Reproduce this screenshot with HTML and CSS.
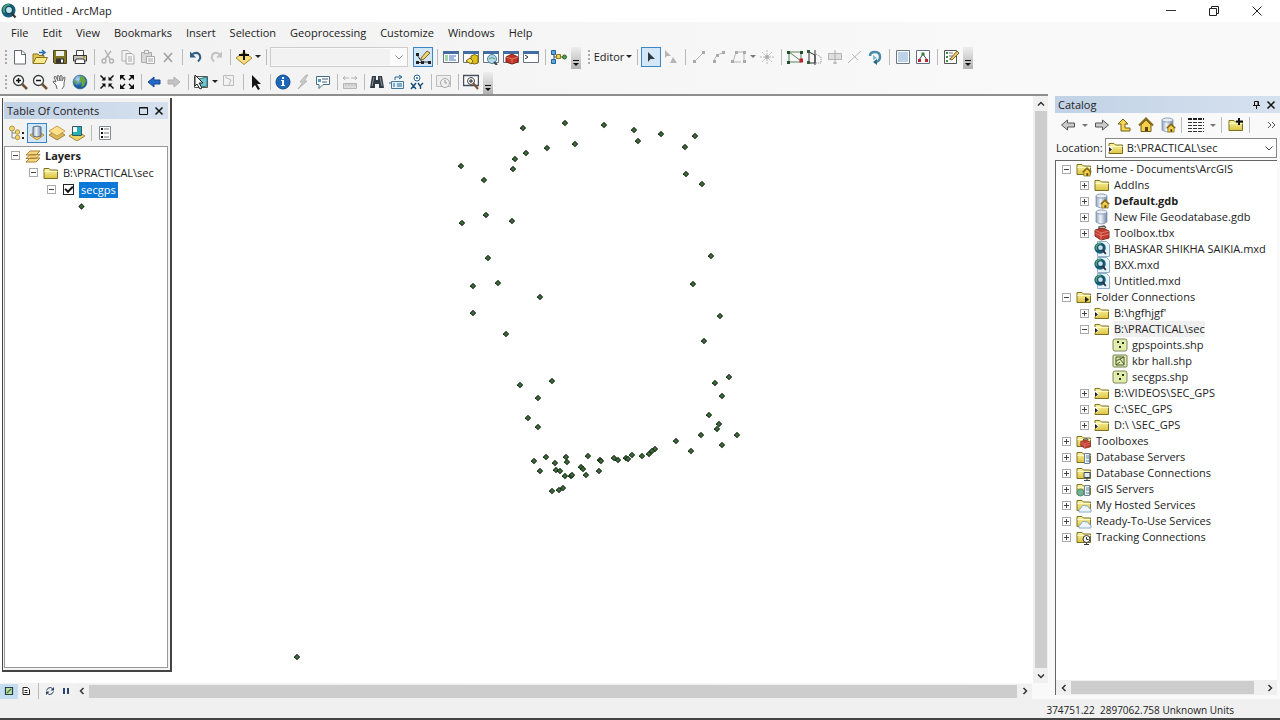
FILE: index.html
```
<!DOCTYPE html>
<html lang="en">
<head>
<meta charset="utf-8">
<title>Untitled - ArcMap</title>
<link rel="stylesheet" href="styles.css">
</head>
<body>
<svg class="defs" aria-hidden="true">
  <defs>
    <linearGradient id="gFolder" x2="0" y2="1"><stop offset="0" stop-color="#fbf5a4"/><stop offset="1" stop-color="#dcc443"/></linearGradient>
    <linearGradient id="gCyl"><stop offset="0" stop-color="#8fa3bd"/><stop offset=".4" stop-color="#f1f5fa"/><stop offset="1" stop-color="#7488a6"/></linearGradient>
    <radialGradient id="gGlobe" cx=".35" cy=".3"><stop offset="0" stop-color="#b5def6"/><stop offset="1" stop-color="#1b5aa0"/></radialGradient>
    <marker id="gps" markerWidth="7" markerHeight="7" refX="3.5" refY="3.5" markerUnits="userSpaceOnUse"><path d="M3.500 .3l3.200 3.200-3.200 3.200-3.200-3.200z" fill="#142414"/><path d="M3.500 1.400l2.100 2.100-2.100 2.100-2.100-2.100z" fill="#3d6e3a"/></marker>
  </defs>
  <symbol id="app" viewBox="0 0 16 16"><circle cx="7.500" cy="7.500" r="7" fill="#175e78"/><path d="M2 5q2-4 6-4l1 2-3 3-2 4-2-1z" fill="#4aa673"/><circle cx="8" cy="7" r="3.600" fill="#bfe4ee" stroke="#164668" stroke-width="1.400"/><path d="M10.500 10l4 4.500" stroke="#333" stroke-width="2.200"/></symbol>
  <symbol id="new" viewBox="0 0 16 16"><path d="M2.500 1.500h7.500l3.500 3.500v10h-11z" fill="#fff" stroke="#606873"/><path d="M9.500 1.500v4h4" fill="none" stroke="#606873"/></symbol>
  <symbol id="open" viewBox="0 0 16 16"><path d="M1 14V5h5l1 1.500h5V9" fill="#e0c552" stroke="#8b741f"/><path d="M1 14.500l3-6h11.500l-3 6z" fill="#fbe88a" stroke="#8b741f"/><path d="M7 3.500h5m-2-2.500l3 2.500-3 2.500" fill="none" stroke="#286ca6" stroke-width="1.500"/></symbol>
  <symbol id="save" viewBox="0 0 16 16"><path d="M1.500 1.500h13v13h-12l-1-1z" fill="#827629" stroke="#4c4720"/><path d="M4 2h8v5H4z" fill="#f2f2ed"/><path d="M4 9.500h8v5H4z" fill="#343434"/><path d="M9 10.500h2v3H9z" fill="#fff"/></symbol>
  <symbol id="print" viewBox="0 0 16 16"><path d="M4.500 6V1.500h7V6" fill="#fff" stroke="#444"/><path d="M1.500 6.500h13V12h-13z" fill="#c5c5bd" stroke="#333"/><path d="M4 10h8l1 4.500H3z" fill="#fff" stroke="#333"/><path d="M11 8h2" stroke="#a98b00" stroke-width="1.500"/></symbol>
  <symbol id="cut" viewBox="0 0 16 16"><path d="M5 1l5 9M11 2l-6 8" stroke="#b4b4b4" stroke-width="1.500"/><circle cx="4" cy="12" r="2" fill="none" stroke="#b4b4b4" stroke-width="1.500"/><circle cx="11.500" cy="12" r="2" fill="none" stroke="#b4b4b4" stroke-width="1.500"/></symbol>
  <symbol id="copy" viewBox="0 0 16 16"><path d="M2 1.500h6l2 2V12H2z" fill="#f3f3f3" stroke="#b0b0b0"/><path d="M6 4.500h6l2 2V15H6zM8 8h4M8 10h4M8 12h4" fill="#f6f6f6" stroke="#a9a9a9"/></symbol>
  <symbol id="paste" viewBox="0 0 16 16"><path d="M1.500 3.500h10v10h-10z" fill="#d8d8d8" stroke="#aaa"/><path d="M4.500 1.500h4v3h-4z" fill="#eee" stroke="#aaa"/><path d="M6.500 7.500h8v7h-8zM8 10h5M8 12h5" fill="#f8f8f8" stroke="#aaa"/></symbol>
  <symbol id="del" viewBox="0 0 16 16"><path d="M4 4l8 9M12 4l-8 9" stroke="#a4a4a4" stroke-width="1.800"/></symbol>
  <symbol id="undo" viewBox="0 0 16 16"><path d="M4 5.500q4-3 7-.5 3 3.500-1 7.500" fill="none" stroke="#315d86" stroke-width="2"/><path d="M2 2.500v6h6z" fill="#315d86"/></symbol>
  <symbol id="redo" viewBox="0 0 16 16"><path d="M12 5.500q-4-3-7-.5-3 3.500 1 7.500" fill="none" stroke="#c2c2c2" stroke-width="2"/><path d="M14 2.500v6H8z" fill="#c2c2c2"/></symbol>
  <symbol id="add" viewBox="0 0 16 16"><path d="M0 9l8-6 8 6-8 6.500z" fill="#f8df78" stroke="#a28938"/><path d="M8 1v10M3 6h10" stroke="#111" stroke-width="2"/></symbol>
  <symbol id="editbar" viewBox="0 0 16 16"><path d="M2 6l5 7h7M2 13.500h5" fill="none" stroke="#333"/><path d="M1 4h3v3H1zM1 12h3v3H1zM6 12h3v3H6zM13 12h3v3h-3z" fill="#222"/><path d="M6 9l6-7 3 2-6 6-3 1z" fill="#efd477" stroke="#7b642a"/></symbol>
  <symbol id="win" viewBox="0 0 16 16"><path d="M.5 2.500h15v11H.5z" fill="#fff" stroke="#687483"/><path d="M0 2h16v3H0z" fill="#426da2"/></symbol>
  <symbol id="wtoc" viewBox="0 0 16 16"><use href="#win"/><path d="M2 7h3M2 9h3M2 11h3" stroke="#42ad53"/><path d="M6 7h7M6 9h5M6 11h7" stroke="#3970bd"/></symbol>
  <symbol id="wcat" viewBox="0 0 16 16"><use href="#win"/><path d="M8 7q3.500-3 7 0v7q-3.500 2-7 0z" fill="#e1c01a" stroke="#79670d"/><path d="M3 12l4-3 3 3-2 3z" fill="#f6df54" stroke="#79670d"/></symbol>
  <symbol id="wsea" viewBox="0 0 16 16"><use href="#win"/><circle cx="9" cy="10" r="4.500" fill="#b3d8e9" stroke="#4e819f"/><path d="M6 10q3-3 6 0" stroke="#4a9d71" fill="none"/><path d="M11 13l3 3" stroke="#444" stroke-width="2"/></symbol>
  <symbol id="wbox" viewBox="0 0 16 16"><use href="#win"/><path d="M3 8l6-3 6 3v5l-6 2-6-2z" fill="#c13426" stroke="#7d2017"/><path d="M3 8l6 2 6-2M9 10v4" stroke="#f5aaa0" stroke-width=".6" fill="none"/></symbol>
  <symbol id="wpy" viewBox="0 0 16 16"><use href="#win"/><path d="M2 6l3 2-3 2" stroke="#333" fill="none"/></symbol>
  <symbol id="model" viewBox="0 0 16 16"><path d="M3 3v10M3 8h11" stroke="#415263"/><path d="M.5 1.500h4v4h-4zM.5 10.500h4v4h-4z" fill="#58a9df" stroke="#246295"/><path d="M5.500 5.500h4v4h-4z" fill="#ead45a" stroke="#8b791c"/><circle cx="13.500" cy="8" r="2" fill="#54a741" stroke="#306226"/></symbol>
  <symbol id="edarrow" viewBox="0 0 16 16"><path d="M5 3v10l2.500-3H12z" fill="#2c3844"/></symbol>
  <symbol id="edanno" viewBox="0 0 16 16"><path d="M2 1v8l2-2h4zM7 14l3-6 4 6z" fill="#b5b5b5"/></symbol>
  <symbol id="line" viewBox="0 0 16 16"><path d="M4 12l8-8" stroke="#b5b5b5"/><path d="M2 11h3v3H2zM11 2h3v3h-3z" fill="#aaa"/></symbol>
  <symbol id="arc" viewBox="0 0 16 16"><path d="M3 13q1-8 9-9" stroke="#b5b5b5" fill="none"/><path d="M2 11h3v3H2zM11 2h3v3h-3zM5 5h3v3H5z" fill="#aaa"/></symbol>
  <symbol id="trace" viewBox="0 0 16 16"><path d="M2 13L5 3h8v10M2 13h8" stroke="#b5b5b5" fill="none"/><path d="M0 11h3v3H0zM4 2h3v3H4zM12 2h3v3h-3zM12 11h3v3h-3z" fill="#aaa"/></symbol>
  <symbol id="burst" viewBox="0 0 16 16"><path d="M8 1v14M1 8h14M3 3l10 10M3 13L13 3" stroke="#b8b8b8" stroke-dasharray="2 1"/><circle cx="8" cy="8" r="2" fill="#aaa"/></symbol>
  <symbol id="vertex" viewBox="0 0 16 16"><path d="M2 3v10h12V3zM2 3l12 9" stroke="#57845b" fill="none"/><path d="M0 2h3v3H0zM13 2h3v3h-3zM0 12h3v3H0z" fill="#244d2c"/><path d="M12.500 9.500h3.500v4h-3.500z" fill="#c0202c"/></symbol>
  <symbol id="reshape" viewBox="0 0 16 16"><path d="M2 2v12h6V6L2 3M8 1v15" stroke="#333" fill="none"/><path d="M9 5l5 3v6H9" stroke="#888" fill="none" stroke-dasharray="1 1"/><path d="M0 1h3v3H0zM0 12h3v3H0z" fill="#315e3b"/></symbol>
  <symbol id="cutpoly" viewBox="0 0 16 16"><path d="M1.500 4.500h13v6h-13z" fill="#dedede" stroke="#b4b4b4"/><path d="M8 1v14M6 14h4" stroke="#aaa"/></symbol>
  <symbol id="split" viewBox="0 0 16 16"><path d="M1 14L14 2M5 5l6 6" stroke="#b8b8b8"/></symbol>
  <symbol id="rotate" viewBox="0 0 16 16"><path d="M3 7q0-4 5-4t5 5q0 4-4 5" fill="none" stroke="#4c8ca8" stroke-width="2.500"/><path d="M10 10v6l-4-3z" fill="#286985"/><path d="M6 6l4 3-4 2z" fill="#78bed5"/></symbol>
  <symbol id="attr" viewBox="0 0 16 16"><path d="M1.500 1.500h13v13h-13z" fill="#fff" stroke="#6b7886"/><path d="M3 4h10M3 6h10M3 8h10M3 10h10M3 12h10" stroke="#7ba7d1"/></symbol>
  <symbol id="sketch" viewBox="0 0 16 16"><path d="M1.500 1.500h13v13h-13z" fill="#fff" stroke="#647181"/><path d="M4 11l4-6 4 6" stroke="#444" fill="none"/><path d="M3 10h3v3H3zM10 10h3v3h-3z" fill="#b32934"/><path d="M6.500 3.500h3v3h-3z" fill="#317e3e"/></symbol>
  <symbol id="template" viewBox="0 0 16 16"><path d="M1.500 1.500h12v13h-12z" fill="#fff" stroke="#555"/><path d="M3 4h2M3 8h2M3 12h2" stroke="#389048" stroke-width="2"/><path d="M6 4h4M6 7h4M6 10h4" stroke="#777"/><path d="M7 10l7-8 2 2-7 7z" fill="#ebc967" stroke="#786330"/></symbol>
  <symbol id="zin" viewBox="0 0 16 16"><circle cx="6.500" cy="6.500" r="5" fill="#f7fafb" stroke="#3b3d40" stroke-width="1.300"/><path d="M10 10l5 5" stroke="#735336" stroke-width="2.500"/><path d="M4 6.500h5M6.500 4v5" stroke="#111" stroke-width="1.500"/></symbol>
  <symbol id="zout" viewBox="0 0 16 16"><circle cx="6.500" cy="6.500" r="5" fill="#f7fafb" stroke="#3b3d40" stroke-width="1.300"/><path d="M10 10l5 5" stroke="#735336" stroke-width="2.500"/><path d="M4 6.500h5" stroke="#111" stroke-width="1.500"/></symbol>
  <symbol id="pan" viewBox="0 0 16 16"><path d="M5 15l-1-4-3-3q0-2 3 0L2 3q1-1 2 0l2 4-1-5q1-1 2 0l1 5V2q1-1 2 0v5l2-4q1 0 1 1l-1 5v3l-2 3" fill="#fff" stroke="#666"/></symbol>
  <symbol id="globe" viewBox="0 0 16 16"><circle cx="8" cy="8" r="7" fill="url(#gGlobe)" stroke="#225d79" stroke-width=".5"/><path d="M8 2l4 1 2 4-2 5-3 1 1-4-3-2 1-2zM2 6l3 1v3l-1 1z" fill="#65a83f"/></symbol>
  <symbol id="fzin" viewBox="0 0 16 16"><path d="M1.500 1.500l4 4M14.500 1.500l-4 4M1.500 14.500l4-4M14.500 14.500l-4-4" stroke="#111" stroke-width="1.500"/><path d="M6.500 2.500v4h-4zM9.500 2.500v4h4zM6.500 13.500v-4h-4zM9.500 13.500v-4h4z" fill="#111"/></symbol>
  <symbol id="fzout" viewBox="0 0 16 16"><path d="M2 2l4 4M14 2l-4 4M2 14l4-4M14 14l-4-4" stroke="#111" stroke-width="1.500"/><path d="M1 1h5L1 6zM15 1h-5l5 5zM1 15h5l-5-5zM15 15h-5l5-5z" fill="#111"/></symbol>
  <symbol id="back" viewBox="0 0 16 16"><path d="M2 8l6-5v3h6v4H8v3z" fill="#2368c6" stroke="#164891"/></symbol>
  <symbol id="fwd" viewBox="0 0 16 16"><path d="M14 8L8 3v3H2v4h6v3z" fill="#c3c3c3" stroke="#b0b0b0"/></symbol>
  <symbol id="selfeat" viewBox="0 0 16 16"><path d="M1.500 2.500h13v11h-13z" fill="#e9f2ed" stroke="#555"/><path d="M6 5l8-2v9l-6 1z" fill="#6bc6d0" stroke="#34757e"/><path d="M2 1v11l2-2 3 5 2-1-3-5h4z" fill="#fff" stroke="#222"/></symbol>
  <symbol id="clearsel" viewBox="0 0 16 16"><path d="M2.500 1.500h10v10h-10zM4 3l6 3-2 5" fill="#f2f2f2" stroke="#bbb"/></symbol>
  <symbol id="arrow" viewBox="0 0 16 16"><path d="M4 1v13l3-3 3 5 2-1-3-5h4z" fill="#151515"/></symbol>
  <symbol id="info" viewBox="0 0 16 16"><circle cx="8" cy="8" r="7" fill="#1d68b9" stroke="#134885"/><path d="M7 3h2v2H7zM6 6h3v5h1v1H6v-1h1V7H6z" fill="#fff"/></symbol>
  <symbol id="bolt" viewBox="0 0 16 16"><path d="M11 1L5 8h3l-5 7 9-8H9l4-6z" fill="#ccc" stroke="#b5b5b5"/></symbol>
  <symbol id="popup" viewBox="0 0 16 16"><path d="M1.500 2.500h13v8H8l-4 4v-4H1.500z" fill="#fff" stroke="#426d88"/><path d="M3 5h3v3H3z" fill="#4d9cc5"/><path d="M7 5h6M7 8h5" stroke="#557"/></symbol>
  <symbol id="measure" viewBox="0 0 16 16"><path d="M1.500 9.500h13v5h-13zM4 10v2M7 10v2M10 10v2M13 10v2M1 4h6M9 4h6M3 2L1 4l2 2M13 2l2 2-2 2" fill="#ddd" stroke="#b5b5b5"/></symbol>
  <symbol id="find" viewBox="0 0 16 16"><path d="M3 2h4v4h2V2h4l2 12h-5v-4H6v4H1z" fill="#303b43"/><path d="M5 3L3 12M11 3l2 9" stroke="#8b969b"/></symbol>
  <symbol id="route" viewBox="0 0 16 16"><path d="M2.500 7.500h12v7h-12z" fill="#e2f1f8" stroke="#4a7796"/><path d="M4 10h2M8 10h5M4 12h2M8 12h5M6 6V3h6m-2-2l3 2-3 2M0 9h2" fill="none" stroke="#246799"/></symbol>
  <symbol id="xy" viewBox="0 0 16 16"><circle cx="8" cy="4" r="3" fill="#fff" stroke="#246799"/><circle cx="8" cy="4" r="1" fill="#246799"/><path d="M2 9l5 6M7 9l-5 6M9 9l2 3 3-3M11.500 12v3" stroke="#174d76" stroke-width="1.400" fill="none"/></symbol>
  <symbol id="time" viewBox="0 0 16 16"><path d="M.5 1.500h14v11H.5z" fill="#eee" stroke="#bcbcbc"/><circle cx="9" cy="9" r="4.500" fill="#eee" stroke="#aaa"/><path d="M9 6v3h2" stroke="#999" fill="none"/></symbol>
  <symbol id="viewer" viewBox="0 0 16 16"><path d="M.5 1.500h15v10H.5z" fill="#fff" stroke="#445260" stroke-width="1.500"/><circle cx="8" cy="7" r="3.500" fill="#fff" stroke="#444"/><path d="M10 9l5 6" stroke="#775437" stroke-width="2"/><path d="M6 7h4M8 5v4" stroke="#222"/></symbol>
  <symbol id="layers" viewBox="0 0 16 16"><path d="M1 14l4-4h10l-4 4zM1 10.500l4-4h10l-4 4zM1 7l4-4h10l-4 4z" fill="#f2d87c" stroke="#ae803b"/></symbol>
  <symbol id="lorder" viewBox="0 0 16 16"><path d="M3 5v8h5M3 8h4" stroke="#888" fill="none"/><circle cx="3" cy="3.500" r="2.500" fill="#f4d66e" stroke="#b19543"/><circle cx="8.500" cy="7" r="2.200" fill="#f4d66e" stroke="#b19543"/><circle cx="8.500" cy="12.500" r="2.200" fill="#f4d66e" stroke="#b19543"/><path d="M13 8h2M13 13h2" stroke="#222" stroke-width="2"/></symbol>
  <symbol id="lsource" viewBox="0 0 16 16"><path d="M1 10l7-4 7 4-7 5z" fill="#f4d36b" stroke="#b38b38"/><path d="M4 2q4-2 8 0v9q-4 2-8 0z" fill="url(#gCyl)" stroke="#596c82"/></symbol>
  <symbol id="lvis" viewBox="0 0 16 16"><path d="M0 10l8-5 8 5-8 5z" fill="#d9b65a" stroke="#a5843b"/><path d="M0 6l8-5 8 5-8 5z" fill="#ffe08b" stroke="#c69e50"/></symbol>
  <symbol id="lsel" viewBox="0 0 16 16"><path d="M0 11l8-5 8 5-8 5z" fill="#eed26a" stroke="#a5843b"/><path d="M3.500 1.500h9v9h-9z" fill="#23b1b6" stroke="#315b62"/><path d="M4 2h4v5H4z" fill="#fff"/></symbol>
  <symbol id="lopt" viewBox="0 0 16 16"><path d="M2.500 1.500h11v13h-11z" fill="#fff" stroke="#858b92"/><path d="M4 4h2M4 8h2M4 12h2" stroke="#111" stroke-width="2"/><path d="M7 4h5M7 8h5M7 12h5" stroke="#777"/></symbol>
  <symbol id="folder" viewBox="0 0 16 16"><path d="M1 13.500v-10h5l1.500 1.500h7v8.500z" fill="url(#gFolder)" stroke="#7c7024"/><path d="M1.500 6.500h13" stroke="#fffbc7"/></symbol>
  <symbol id="fconn" viewBox="0 0 16 16"><use href="#folder"/><path d="M0 6h2l3 3-3 3H0z" fill="#fff"/><path d="M1 7l3 2.500-3 2.500z" fill="#222"/></symbol>
  <symbol id="froot" viewBox="0 0 16 16"><use href="#folder"/><path d="M9 7.500l4 3-4 3z" fill="#222"/></symbol>
  <symbol id="house" viewBox="0 0 16 16"><path d="M3 8v6.500h10V8L8 3z" fill="#f3ce46" stroke="#715e1b"/><path d="M1 8.500l7-7 7 7" fill="none" stroke="#876a17" stroke-width="2"/><path d="M7 10h3v4H7z" fill="#544119"/></symbol>
  <symbol id="fhome" viewBox="0 0 16 16"><use href="#folder"/><use href="#house" x="6" y="6" width="10" height="10"/></symbol>
  <symbol id="gdb" viewBox="0 0 16 16"><path d="M2 3v10q6 4 11 0V3" fill="url(#gCyl)" stroke="#788ba5" stroke-width=".7"/><ellipse cx="7.500" cy="3" rx="5.500" ry="2" fill="#e8f0f8" stroke="#899bb5"/></symbol>
  <symbol id="gdbhome" viewBox="0 0 16 16"><use href="#gdb"/><use href="#house" x="6" y="6" width="10" height="10"/></symbol>
  <symbol id="tbx" viewBox="0 0 16 16"><path d="M5 4V2l5-1 2 2" fill="none" stroke="#555" stroke-width="1.500"/><path d="M1 5l8-2 6 3v7l-8 2-6-4z" fill="#c43b2e" stroke="#802b24"/><path d="M1 5l6 3 8-2M7 8v7M1 8l6 3 8-2" fill="none" stroke="#f4aaa1" stroke-width=".6"/></symbol>
  <symbol id="mxd" viewBox="0 0 16 16"><path d="M3.500 .5h9l3 3v12h-12z" fill="#e5f5fb" stroke="#8fb0c8"/><use href="#app" y="1" width="13" height="13"/></symbol>
  <symbol id="pts" viewBox="0 0 16 16"><rect x="1" y="2" width="14" height="12" rx="2" fill="#e2edac" stroke="#7a895a"/><path d="M5 4h2v2H5zM10 5h2v2h-2zM7 9h2v2H7z" fill="#253525"/></symbol>
  <symbol id="raster" viewBox="0 0 16 16"><rect x="1" y="2" width="14" height="12" rx="1" fill="#e2edac" stroke="#718052"/><path d="M4 4h8v8H4zM4 8l4-2 4-2M8 6l4 5M4 12l4-3" fill="none" stroke="#465737"/></symbol>
  <symbol id="ftbx" viewBox="0 0 16 16"><use href="#folder"/><use href="#tbx" x="4" y="5" width="11" height="11"/></symbol>
  <symbol id="fserver" viewBox="0 0 16 16"><use href="#folder"/><path d="M8.500 4.500h5v10h-5z" fill="#edf5fa" stroke="#66839a"/><path d="M10 7h3M10 9h3M10 12h3" stroke="#66839a"/></symbol>
  <symbol id="fgis" viewBox="0 0 16 16"><use href="#fserver"/><circle cx="4.500" cy="11.500" r="3.500" fill="#70b492" stroke="#518770"/></symbol>
  <symbol id="fdb" viewBox="0 0 16 16"><use href="#folder"/><path d="M8 7.500h6v5H8zM11 12.500v3M8 15.500h6" fill="#e4eaf1" stroke="#3c4c5c"/></symbol>
  <symbol id="fcloud" viewBox="0 0 16 16"><use href="#folder"/><path d="M3 15q-1-3 2-4 1-4 5-2 2-1 3 2 3 1 2 4z" fill="#edf6fe" stroke="#8aa9c2"/></symbol>
  <symbol id="ftrack" viewBox="0 0 16 16"><use href="#folder"/><circle cx="10.500" cy="10" r="3.500" fill="#f4f8fa" stroke="#333"/><path d="M10.500 8v2.500h2M10.500 14v2M8 15.500h5" stroke="#333" fill="none"/></symbol>
  <symbol id="cback" viewBox="0 0 16 16"><path d="M1.500 8l6-5v3h7v4h-7v3z" fill="#ccc" stroke="#555"/></symbol>
  <symbol id="cfwd" viewBox="0 0 16 16"><path d="M14.500 8l-6-5v3h-7v4h7v3z" fill="#ccc" stroke="#555"/></symbol>
  <symbol id="up" viewBox="0 0 16 16"><path d="M2 7l5-5 5 5H9v4h5v3H5V7z" fill="#f4d653" stroke="#776019"/></symbol>
  <symbol id="details" viewBox="0 0 16 16"><path d="M0 2h16" stroke="#222" stroke-width="2" stroke-dasharray="4 1"/><path d="M0 5.500h16M0 8.500h16M0 11.500h16M0 14.500h16" stroke="#333" stroke-dasharray="4 1"/></symbol>
  <symbol id="connect" viewBox="0 0 16 16"><use href="#folder"/><path d="M11 1v7M8 4.500h7" stroke="#111" stroke-width="2"/></symbol>
  <symbol id="vdata" viewBox="0 0 16 16"><path d="M4.500 4.500h7v7h-7z" fill="#c6e09c" stroke="#273e49" stroke-width="1.200"/><path d="M6 10l4-4" stroke="#31805b" stroke-width="1.500"/></symbol>
  <symbol id="vlayout" viewBox="0 0 16 16"><path d="M5 4.500h4.500l2 2v5H5zM6.500 7.500h3M6.500 9.500h3" fill="#fff" stroke="#222"/></symbol>
  <symbol id="refresh" viewBox="0 0 16 16"><path d="M4.500 7.500q1-3 4-3l2 1M11.500 8.500q-1 3-4 3l-2-1" fill="none" stroke="#244163"/><path d="M12 4v3.500H8.500zM4 12V8.500h3.500z" fill="#244163"/></symbol>
  <symbol id="pause" viewBox="0 0 16 16"><path d="M6 5v6M10 5v6" stroke="#2b4470" stroke-width="2"/></symbol>
  <symbol id="cl" viewBox="0 0 8 8"><path d="M5.500 1l-3 3 3 3" fill="none" stroke="#333" stroke-width="1.500"/></symbol>
  <symbol id="cr" viewBox="0 0 8 8"><path d="M2.500 1l3 3-3 3" fill="none" stroke="#333" stroke-width="1.500"/></symbol>
  <symbol id="cu" viewBox="0 0 8 8"><path d="M1 5.500l3-3 3 3" fill="none" stroke="#333" stroke-width="1.500"/></symbol>
  <symbol id="cd" viewBox="0 0 8 8"><path d="M1 2.500l3 3 3-3" fill="none" stroke="#333" stroke-width="1.500"/></symbol>
  <symbol id="chev" viewBox="0 0 8 8"><path d="M.5 2.500L4 6l3.500-3.500" fill="none" stroke="#444"/></symbol>
  <symbol id="min" viewBox="0 0 12 12"><path d="M1 5.500h10" stroke="#333"/></symbol>
  <symbol id="restore" viewBox="0 0 12 12"><path d="M1.500 3.500h7v7h-7zM3.500 3V1.500h7v7H9" fill="none" stroke="#222"/></symbol>
  <symbol id="close" viewBox="0 0 12 12"><path d="M1.500 1.500l9 9M10.500 1.500l-9 9" stroke="#222"/></symbol>
  <symbol id="max" viewBox="0 0 12 12"><path d="M1.500 2.500h8v7h-8zM1 3h9" fill="none" stroke="#111"/></symbol>
  <symbol id="px" viewBox="0 0 12 12"><path d="M2.500 2.500l7 7M9.500 2.500l-7 7" stroke="#111" stroke-width="1.500"/></symbol>
  <symbol id="pin" viewBox="0 0 12 12"><path d="M4.500 6V2.500h4V6M3 6.500h7M6.500 7v3M8 3v3" fill="none" stroke="#111"/></symbol>
  <symbol id="more" viewBox="0 0 10 8"><path d="M1 1l3 3-3 3M5 1l3 3-3 3" fill="none" stroke="#555"/></symbol>
</svg>

<header class="titlebar">
  <svg class="ic"><use href="#app"/></svg>
  <h1 class="title">Untitled - ArcMap</h1>
  <div class="winbtns">
    <button aria-label="Minimize"><svg class="ic12"><use href="#min"/></svg></button>
    <button aria-label="Restore"><svg class="ic12"><use href="#restore"/></svg></button>
    <button aria-label="Close"><svg class="ic12"><use href="#close"/></svg></button>
  </div>
</header>

<nav class="menubar">
  <button>File</button><button>Edit</button><button>View</button><button>Bookmarks</button><button>Insert</button><button>Selection</button><button>Geoprocessing</button><button>Customize</button><button>Windows</button><button>Help</button>
</nav>

<div class="toolbars">
  <div class="toolrow">
    <i class="grip"></i>
    <button class="tb" aria-label="New"><svg class="ic"><use href="#new"/></svg></button>
    <button class="tb" aria-label="Open"><svg class="ic"><use href="#open"/></svg></button>
    <button class="tb" aria-label="Save"><svg class="ic"><use href="#save"/></svg></button>
    <button class="tb" aria-label="Print"><svg class="ic"><use href="#print"/></svg></button>
    <i class="sep"></i>
    <button class="tb" aria-label="Cut"><svg class="ic"><use href="#cut"/></svg></button>
    <button class="tb" aria-label="Copy"><svg class="ic"><use href="#copy"/></svg></button>
    <button class="tb" aria-label="Paste"><svg class="ic"><use href="#paste"/></svg></button>
    <button class="tb" aria-label="Delete"><svg class="ic"><use href="#del"/></svg></button>
    <i class="sep"></i>
    <button class="tb" aria-label="Undo"><svg class="ic"><use href="#undo"/></svg></button>
    <button class="tb" aria-label="Redo"><svg class="ic"><use href="#redo"/></svg></button>
    <i class="sep"></i>
    <button class="tb" aria-label="Add data"><svg class="ic"><use href="#add"/></svg></button>
    <button class="drop" aria-label="Add data menu"></button>
    <i class="sep"></i>
    <div class="scale"><select aria-label="Map scale" disabled><option></option></select><svg class="ic8"><use href="#chev"/></svg></div>
    <button class="tb on" aria-label="Editor toolbar"><svg class="ic"><use href="#editbar"/></svg></button>
    <i class="sep"></i>
    <button class="tb" aria-label="Table of contents"><svg class="ic"><use href="#wtoc"/></svg></button>
    <button class="tb" aria-label="Catalog"><svg class="ic"><use href="#wcat"/></svg></button>
    <button class="tb" aria-label="Search"><svg class="ic"><use href="#wsea"/></svg></button>
    <button class="tb" aria-label="ArcToolbox"><svg class="ic"><use href="#wbox"/></svg></button>
    <button class="tb" aria-label="Python"><svg class="ic"><use href="#wpy"/></svg></button>
    <i class="sep"></i>
    <button class="tb" aria-label="ModelBuilder"><svg class="ic"><use href="#model"/></svg></button>
    <button class="overflow" aria-label="Toolbar options"></button>
    <i class="grip"></i>
    <button class="editor">Editor<span class="caret"></span></button>
    <i class="sep"></i>
    <button class="tb on" aria-label="Edit tool"><svg class="ic"><use href="#edarrow"/></svg></button>
    <button class="tb" aria-label="Edit annotation"><svg class="ic"><use href="#edanno"/></svg></button>
    <i class="sep"></i>
    <button class="tb" aria-label="Straight segment"><svg class="ic"><use href="#line"/></svg></button>
    <button class="tb" aria-label="Arc segment"><svg class="ic"><use href="#arc"/></svg></button>
    <button class="tb" aria-label="Trace"><svg class="ic"><use href="#trace"/></svg></button>
    <button class="drop off" aria-label="Trace menu"></button>
    <button class="tb" aria-label="Point"><svg class="ic"><use href="#burst"/></svg></button>
    <i class="sep"></i>
    <button class="tb" aria-label="Edit vertices"><svg class="ic"><use href="#vertex"/></svg></button>
    <button class="tb" aria-label="Reshape"><svg class="ic"><use href="#reshape"/></svg></button>
    <button class="tb" aria-label="Cut polygons"><svg class="ic"><use href="#cutpoly"/></svg></button>
    <button class="tb" aria-label="Split"><svg class="ic"><use href="#split"/></svg></button>
    <button class="tb" aria-label="Rotate"><svg class="ic"><use href="#rotate"/></svg></button>
    <i class="sep"></i>
    <button class="tb" aria-label="Attributes"><svg class="ic"><use href="#attr"/></svg></button>
    <button class="tb" aria-label="Sketch properties"><svg class="ic"><use href="#sketch"/></svg></button>
    <i class="sep"></i>
    <button class="tb" aria-label="Create features"><svg class="ic"><use href="#template"/></svg></button>
    <button class="overflow" aria-label="Editor options"></button>
  </div>
  <div class="toolrow tools">
    <i class="grip"></i>
    <button class="tb" aria-label="Zoom in"><svg class="ic"><use href="#zin"/></svg></button>
    <button class="tb" aria-label="Zoom out"><svg class="ic"><use href="#zout"/></svg></button>
    <button class="tb" aria-label="Pan"><svg class="ic"><use href="#pan"/></svg></button>
    <button class="tb" aria-label="Full extent"><svg class="ic"><use href="#globe"/></svg></button>
    <i class="sep"></i>
    <button class="tb" aria-label="Fixed zoom in"><svg class="ic"><use href="#fzin"/></svg></button>
    <button class="tb" aria-label="Fixed zoom out"><svg class="ic"><use href="#fzout"/></svg></button>
    <i class="sep"></i>
    <button class="tb" aria-label="Previous extent"><svg class="ic"><use href="#back"/></svg></button>
    <button class="tb" aria-label="Next extent"><svg class="ic"><use href="#fwd"/></svg></button>
    <i class="sep"></i>
    <button class="tb" aria-label="Select features"><svg class="ic"><use href="#selfeat"/></svg></button>
    <button class="drop" aria-label="Select menu"></button>
    <button class="tb" aria-label="Clear selection"><svg class="ic"><use href="#clearsel"/></svg></button>
    <i class="sep"></i>
    <button class="tb" aria-label="Select elements"><svg class="ic"><use href="#arrow"/></svg></button>
    <i class="sep"></i>
    <button class="tb" aria-label="Identify"><svg class="ic"><use href="#info"/></svg></button>
    <button class="tb" aria-label="Hyperlink"><svg class="ic"><use href="#bolt"/></svg></button>
    <button class="tb" aria-label="HTML popup"><svg class="ic"><use href="#popup"/></svg></button>
    <i class="sep"></i>
    <button class="tb" aria-label="Measure"><svg class="ic"><use href="#measure"/></svg></button>
    <i class="sep"></i>
    <button class="tb" aria-label="Find"><svg class="ic"><use href="#find"/></svg></button>
    <button class="tb" aria-label="Find route"><svg class="ic"><use href="#route"/></svg></button>
    <button class="tb" aria-label="Go to XY"><svg class="ic"><use href="#xy"/></svg></button>
    <i class="sep"></i>
    <button class="tb" aria-label="Time slider"><svg class="ic"><use href="#time"/></svg></button>
    <i class="sep"></i>
    <button class="tb" aria-label="Viewer window"><svg class="ic"><use href="#viewer"/></svg></button>
    <button class="overflow" aria-label="Tools options"></button>
  </div>
</div>

<main class="work">
  <section class="mapwin">
    <div class="mapview">
      <aside class="toc">
        <div class="phead"><h2>Table Of Contents</h2><button aria-label="Maximize"><svg class="ic12"><use href="#max"/></svg></button><button aria-label="Close contents"><svg class="ic12"><use href="#px"/></svg></button></div>
        <div class="tocbar">
          <button class="tb" aria-label="List by drawing order"><svg class="ic"><use href="#lorder"/></svg></button>
          <button class="tb on" aria-label="List by source"><svg class="ic"><use href="#lsource"/></svg></button>
          <button class="tb" aria-label="List by visibility"><svg class="ic"><use href="#lvis"/></svg></button>
          <button class="tb" aria-label="List by selection"><svg class="ic"><use href="#lsel"/></svg></button>
          <i class="sep"></i>
          <button class="tb" aria-label="Options"><svg class="ic"><use href="#lopt"/></svg></button>
        </div>
        <ul class="toctree">
          <li><button class="exp" aria-label="Collapse"></button><svg class="ic"><use href="#layers"/></svg><b>Layers</b></li>
          <li class="l1"><button class="exp" aria-label="Collapse"></button><svg class="ic"><use href="#folder"/></svg><span>B:\PRACTICAL\sec</span></li>
          <li class="l2"><button class="exp" aria-label="Collapse"></button><input type="checkbox" id="secgps" checked><label for="secgps">secgps</label></li>
          <li class="l3"><svg class="symbol"><path d="M3.500 3.500h0" marker-start="url(#gps)"/></svg></li>
        </ul>
      </aside>
      <svg class="points" role="img" aria-label="GPS points">
        <path transform="translate(-172 -96)" fill="none" marker-start="url(#gps)" marker-mid="url(#gps)" marker-end="url(#gps)" d="M523 128L565 123 604 125 634 130 638 141 661 134 695 136 685 147 575 144 547 148 526 153 515 159 513 169 461 166 484 180 686 174 702 184 486 215 462 223 512 221 488 258 711 256 473 286 498 283 540 297 693 284 473 313 720 316 506 334 704 341 520 385 552 381 538 398 528 418 538 427 729 377 715 383 722 396 709 415 719 424 717 429 701 435 737 435 722 445 676 441 691 451 655 449 652 451 649 454 642 456 632 455 626 458 628 459 618 460 614 458 588 456 600 460 601 461 599 471 586 475 581 467 583 469 566 457 567 462 546 457 534 461 540 471 555 463 556 470 560 471 565 476 571 476 572 475 552 491 559 490 563 488 297 657"/>
      </svg>
      <div class="vscroll"><button aria-label="Scroll up"><svg class="ic8"><use href="#cu"/></svg></button><div class="thumb"></div><button aria-label="Scroll down"><svg class="ic8"><use href="#cd"/></svg></button></div>
    </div>
    <div class="mapfoot">
      <button class="vb on" aria-label="Data view"><svg class="ic"><use href="#vdata"/></svg></button>
      <button class="vb" aria-label="Layout view"><svg class="ic"><use href="#vlayout"/></svg></button>
      <i class="sep"></i>
      <button class="vb" aria-label="Refresh"><svg class="ic"><use href="#refresh"/></svg></button>
      <button class="vb" aria-label="Pause drawing"><svg class="ic"><use href="#pause"/></svg></button>
      <div class="hscroll"><button aria-label="Scroll left"><svg class="ic8"><use href="#cl"/></svg></button><div class="thumb"></div><button aria-label="Scroll right"><svg class="ic8"><use href="#cr"/></svg></button></div>
    </div>
  </section>

  <aside class="catalog">
    <div class="phead"><h2>Catalog</h2><button aria-label="Auto hide"><svg class="ic12"><use href="#pin"/></svg></button><button aria-label="Close catalog"><svg class="ic12"><use href="#px"/></svg></button></div>
    <div class="catbar">
      <button class="tb" aria-label="Back"><svg class="ic"><use href="#cback"/></svg></button>
      <button class="drop off" aria-label="Back history"></button>
      <button class="tb" aria-label="Forward"><svg class="ic"><use href="#cfwd"/></svg></button>
      <button class="tb" aria-label="Up one level"><svg class="ic"><use href="#up"/></svg></button>
      <button class="tb" aria-label="Home"><svg class="ic"><use href="#house"/></svg></button>
      <button class="tb" aria-label="Default geodatabase"><svg class="ic"><use href="#gdbhome"/></svg></button>
      <i class="sep"></i>
      <button class="tb" aria-label="View"><svg class="ic"><use href="#details"/></svg></button>
      <button class="drop off" aria-label="View menu"></button>
      <i class="sep"></i>
      <button class="tb" aria-label="Connect to folder"><svg class="ic"><use href="#connect"/></svg></button>
      <i class="sep"></i>
      <button class="tb more" aria-label="More"><svg><use href="#more"/></svg></button>
    </div>
    <div class="location">
      <label for="loc">Location:</label>
      <div class="combo"><svg class="ic"><use href="#fconn"/></svg><select id="loc"><option>B:\PRACTICAL\sec</option></select><svg class="ic8"><use href="#chev"/></svg></div>
    </div>
    <div class="cattree">
      <ul>
        <li><button class="exp" aria-label="Collapse"></button><svg class="ic"><use href="#fhome"/></svg><span>Home - Documents\ArcGIS</span></li>
        <li class="l1"><button class="exp plus" aria-label="Expand"></button><svg class="ic"><use href="#folder"/></svg><span>AddIns</span></li>
        <li class="l1"><button class="exp plus" aria-label="Expand"></button><svg class="ic"><use href="#gdbhome"/></svg><b>Default.gdb</b></li>
        <li class="l1"><button class="exp plus" aria-label="Expand"></button><svg class="ic"><use href="#gdb"/></svg><span>New File Geodatabase.gdb</span></li>
        <li class="l1"><button class="exp plus" aria-label="Expand"></button><svg class="ic"><use href="#tbx"/></svg><span>Toolbox.tbx</span></li>
        <li class="leaf1"><svg class="ic"><use href="#mxd"/></svg><span>BHASKAR SHIKHA SAIKIA.mxd</span></li>
        <li class="leaf1"><svg class="ic"><use href="#mxd"/></svg><span>BXX.mxd</span></li>
        <li class="leaf1"><svg class="ic"><use href="#mxd"/></svg><span>Untitled.mxd</span></li>
        <li><button class="exp" aria-label="Collapse"></button><svg class="ic"><use href="#froot"/></svg><span>Folder Connections</span></li>
        <li class="l1"><button class="exp plus" aria-label="Expand"></button><svg class="ic"><use href="#fconn"/></svg><span>B:\hgfhjgf'</span></li>
        <li class="l1"><button class="exp" aria-label="Collapse"></button><svg class="ic"><use href="#fconn"/></svg><span class="current">B:\PRACTICAL\sec</span></li>
        <li class="leaf2"><svg class="ic"><use href="#pts"/></svg><span>gpspoints.shp</span></li>
        <li class="leaf2"><svg class="ic"><use href="#raster"/></svg><span>kbr hall.shp</span></li>
        <li class="leaf2"><svg class="ic"><use href="#pts"/></svg><span>secgps.shp</span></li>
        <li class="l1"><button class="exp plus" aria-label="Expand"></button><svg class="ic"><use href="#fconn"/></svg><span>B:\VIDEOS\SEC_GPS</span></li>
        <li class="l1"><button class="exp plus" aria-label="Expand"></button><svg class="ic"><use href="#fconn"/></svg><span>C:\SEC_GPS</span></li>
        <li class="l1"><button class="exp plus" aria-label="Expand"></button><svg class="ic"><use href="#fconn"/></svg><span>D:\ \SEC_GPS</span></li>
        <li><button class="exp plus" aria-label="Expand"></button><svg class="ic"><use href="#ftbx"/></svg><span>Toolboxes</span></li>
        <li><button class="exp plus" aria-label="Expand"></button><svg class="ic"><use href="#fserver"/></svg><span>Database Servers</span></li>
        <li><button class="exp plus" aria-label="Expand"></button><svg class="ic"><use href="#fdb"/></svg><span>Database Connections</span></li>
        <li><button class="exp plus" aria-label="Expand"></button><svg class="ic"><use href="#fgis"/></svg><span>GIS Servers</span></li>
        <li><button class="exp plus" aria-label="Expand"></button><svg class="ic"><use href="#fcloud"/></svg><span>My Hosted Services</span></li>
        <li><button class="exp plus" aria-label="Expand"></button><svg class="ic"><use href="#fcloud"/></svg><span>Ready-To-Use Services</span></li>
        <li><button class="exp plus" aria-label="Expand"></button><svg class="ic"><use href="#ftrack"/></svg><span>Tracking Connections</span></li>
      </ul>
      <div class="hscroll"><button aria-label="Scroll left"><svg class="ic8"><use href="#cl"/></svg></button><div class="thumb"></div><button aria-label="Scroll right"><svg class="ic8"><use href="#cr"/></svg></button></div>
    </div>
  </aside>
</main>

<footer class="status"><span>374751.22&nbsp; 2897062.758 Unknown Units</span></footer>
</body>
</html>
```

FILE: styles.css
```
* { box-sizing: border-box; }

body {
  margin: 0;
  height: 100vh;
  display: flex;
  flex-direction: column;
  overflow: hidden;
  background: linear-gradient(90deg, #f1f1f1, #f9f9f9 80%);
  color: #222;
  font: 11px/16px "Open Sans", "Noto Sans", sans-serif;
}

button, select, input { font: inherit; color: inherit; }
button { padding: 0; border: 0; background: none; display: flex; align-items: center; justify-content: center; }
h1, h2 { margin: 0; font: inherit; }
ul { margin: 0; padding: 0; list-style: none; }
svg { flex: none; display: block; }
.defs { position: absolute; width: 0; height: 0; }
.ic { width: 16px; height: 16px; }
.ic12 { width: 12px; height: 12px; }
.ic8 { width: 8px; height: 8px; }

/* Title and menus */
.titlebar { height: 22px; display: flex; align-items: center; padding: 0 2px 0 1px; background: #fff; }
.title { flex: 1; padding-left: 5px; }
.winbtns { display: flex; height: 20px; }
.winbtns button { width: 43px; }
.menubar { height: 22px; display: flex; align-items: center; padding-left: 4px; }
.menubar button { padding: 0 7px; }

/* Toolbars */
.toolbars { height: 52px; border-bottom: 2px solid #8e8e8e; margin-right: 232px; flex: none; }
.toolrow { display: flex; height: 25px; align-items: center; }
.tb { width: 20px; height: 20px; flex: none; }
.tb.on { border: 1px solid #3c86c4; background: #d3e7f6; }
.tb.on .ic { margin: -1px; }
.sep { width: 8px; height: 16px; flex: none; border-left: 4px solid transparent; background: linear-gradient(90deg, #bbb 1px, transparent 1px) content-box; }
.tools .sep { width: 7px; }
.grip { width: 10px; height: 14px; flex: none; background: repeating-linear-gradient(#aaa 0 2px, transparent 2px 4px) 5px 0 / 2px 14px no-repeat; }
.drop { width: 8px; height: 18px; flex: none; }
.drop::after, .caret { content: ""; border: 3px solid transparent; border-top-color: #222; border-bottom: 0; }
.drop.off::after { border-top-color: #777; }
.scale { width: 138px; height: 20px; margin-right: 5px; display: flex; align-items: center; padding-right: 4px; border: 1px solid #ccc; background: #fbfbfb; }
.scale select { flex: 1; min-width: 0; height: 16px; border: 0; background: #f2f2f2; appearance: none; opacity: 1; }
.scale svg { opacity: .6; margin-left: 5px; }
.overflow { width: 10px; height: 22px; margin: 0 2px; flex: none; flex-direction: column; justify-content: flex-end; padding-bottom: 3px; background: linear-gradient(#eee, #b2b2b2); align-self: flex-end; }
.overflow::before { content: ""; width: 6px; height: 1px; margin-bottom: 2px; background: #111; }
.overflow::after { content: ""; border: 3px solid transparent; border-top-color: #111; border-bottom: 0; }
.editor { width: 40px; height: 20px; gap: 2px; flex: none; }

/* Work area */
.work { flex: 1; min-height: 0; display: flex; }
.mapwin { flex: 1; min-width: 0; display: flex; flex-direction: column; margin-right: 5px; }
.mapview { flex: 1; min-height: 0; display: flex; background: #fff; }
.points { flex: 1; min-width: 0; height: 100%; overflow: visible; }

.phead { height: 17px; display: flex; align-items: center; gap: 3px; padding: 0 3px; background: linear-gradient(90deg, #c1d2e6, #d6e1ee); flex: none; }
.phead h2 { flex: 1; }

.toc { width: 170px; margin: 2px 0 11px 2px; padding: 4px 2px 2px 1px; display: flex; flex-direction: column; background: #f3f3f3; border: solid #444; border-width: 0 2px 2px 1px; }
.tocbar { height: 27px; display: flex; align-items: center; padding-left: 3px; }
.toctree { flex: 1; padding: 0 0 0 6px; background: #fff; border: 1px solid #999; }
.toctree li { height: 17px; display: flex; align-items: center; }
.toctree .ic { margin: 0 4px 0 5px; }
.toctree .l1 { padding-left: 18px; }
.toctree .l2 { padding-left: 36px; }
.toctree .l3 { padding-left: 67px; }
.toctree label { padding: 0 2px; background: #0a78d7; color: #fff; }
.toctree input { appearance: none; width: 11px; height: 11px; margin: 0 5px 0 7px; border: 1px solid #222; background: #fff; display: grid; place-items: center; }
.toctree input:checked::after { content: ""; width: 6px; height: 3px; border: solid #111; border-width: 0 0 2px 2px; transform: rotate(-45deg); margin-bottom: 2px; }
.symbol { width: 7px; height: 7px; }

.exp { width: 9px; height: 9px; flex: none; border: 1px solid #aaa; background: linear-gradient(#444, #444) center / 5px 1px no-repeat #fff; }
.exp.plus { background: linear-gradient(#444, #444) center / 5px 1px no-repeat, linear-gradient(#444, #444) center / 1px 5px no-repeat #fff; }

/* Scroll bars */
.vscroll { width: 15px; display: flex; flex-direction: column; align-items: center; background: #f0f0f0; }
.vscroll button { width: 15px; height: 15px; }
.thumb { flex: 1; background: #cdcdcd; }
.vscroll .thumb { width: 12px; }
.hscroll { flex: 1; min-width: 0; height: 15px; display: flex; align-items: center; background: #f0f0f0; }
.hscroll button { width: 15px; height: 15px; }
.hscroll .thumb { height: 13px; }
.mapfoot { height: 16px; display: flex; align-items: center; padding-right: 16px; flex: none; }
.vb { width: 16px; height: 15px; flex: none; }
.vb.on { background: #c4ddf0; width: 18px; }

/* Catalog */
.catalog { width: 227px; flex: none; display: flex; flex-direction: column; padding: 0 3px 4px 2px; }
.catalog .phead { margin-right: -3px; }
.catbar { height: 24px; display: flex; align-items: center; padding-left: 2px; }
.catbar .tb { width: 22px; }
.catbar .drop { width: 12px; }
.catbar .sep { width: 6px; border-left-width: 2px; }
.catbar .more { flex: 1; justify-content: flex-end; }
.more svg { width: 10px; height: 8px; }
.location { height: 22px; display: flex; align-items: center; gap: 2px; padding-left: 1px; }
.combo { flex: 1; min-width: 0; height: 20px; display: flex; align-items: center; padding: 0 3px 0 2px; border: 1px solid #888; background: #fff; }
.combo select { flex: 1; min-width: 0; appearance: none; border: 0; padding: 0 0 0 3px; background: none; }
.cattree { flex: 1; min-height: 0; margin-top: 1px; display: flex; flex-direction: column; background: #fff; border: solid #666; border-width: 1px 0 0 1px; }
.cattree ul { flex: 1; padding-left: 6px; overflow: hidden; }
.cattree li { height: 16px; display: flex; align-items: center; white-space: nowrap; }
.cattree .ic { margin: 0 4px 0 5px; }
.cattree .l1 { padding-left: 18px; }
.cattree .leaf1 { padding-left: 27px; }
.cattree .leaf2 { padding-left: 45px; }
.current { background: #f0f0f0; }
.cattree .hscroll { flex: none; }
.cattree .thumb { margin-right: 8px; }

.status { height: 21px; flex: none; display: flex; justify-content: flex-end; padding: 4px 46px 0 0; border-bottom: 2px solid #444; background: #f0f0f0; font-size: 10px; line-height: 15px; }
```
